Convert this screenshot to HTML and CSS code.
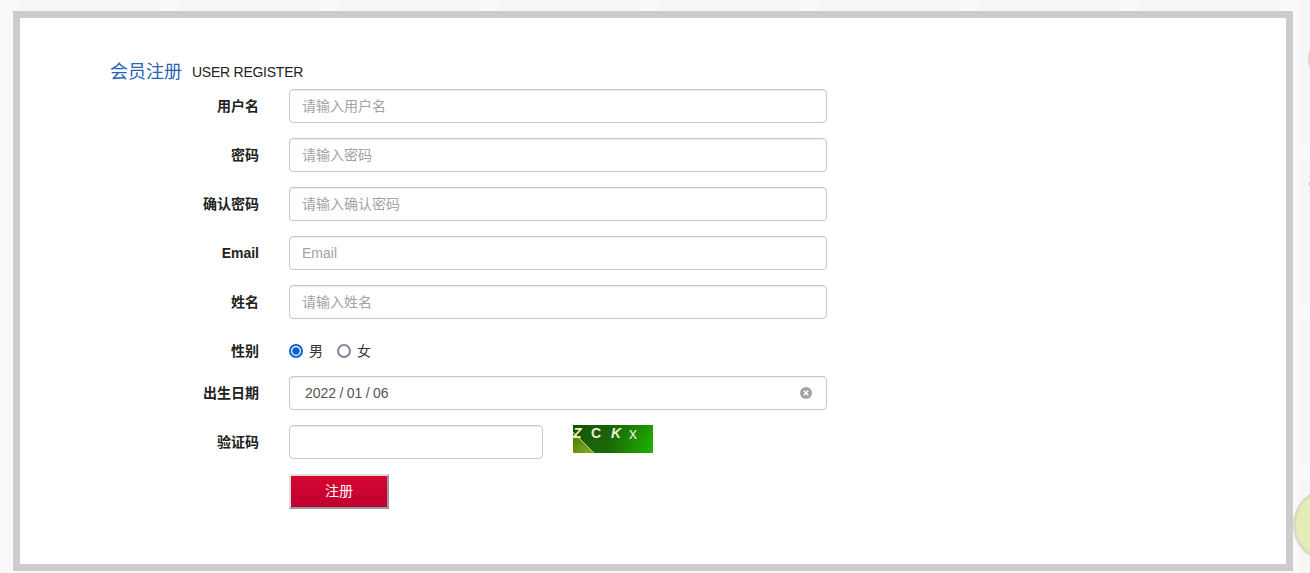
FILE: index.html
```html
<!DOCTYPE html>
<html lang="zh-CN">
<head>
    <meta charset="UTF-8">
    <title>会员注册</title>
    <link rel="stylesheet" href="styles.css">
</head>
<body>
    <div class="decor decor-red"></div>
    <div class="decor decor-pink"></div>
    <div class="decor decor-lime"></div>

    <div class="register-box">
        <div class="title-line">
            <span class="title-cn">会员注册</span>
            <span class="title-en">USER REGISTER</span>
        </div>

        <form class="register-form">
            <div class="form-row">
                <label class="form-label">用户名</label>
                <input class="form-input" type="text" placeholder="请输入用户名">
            </div>
            <div class="form-row">
                <label class="form-label">密码</label>
                <input class="form-input" type="password" placeholder="请输入密码">
            </div>
            <div class="form-row">
                <label class="form-label">确认密码</label>
                <input class="form-input" type="password" placeholder="请输入确认密码">
            </div>
            <div class="form-row">
                <label class="form-label">Email</label>
                <input class="form-input" type="text" placeholder="Email">
            </div>
            <div class="form-row">
                <label class="form-label">姓名</label>
                <input class="form-input" type="text" placeholder="请输入姓名">
            </div>
            <div class="form-row gender-row">
                <label class="form-label">性别</label>
                <label class="radio-item"><input type="radio" name="sex" checked>男</label>
                <label class="radio-item"><input type="radio" name="sex">女</label>
            </div>
            <div class="form-row">
                <label class="form-label">出生日期</label>
                <div class="form-input date-input">
                    <span class="date-value">2022 / 01 / 06</span>
                    <svg class="clear-icon" width="12" height="12" viewBox="0 0 12 12">
                        <circle cx="6" cy="6" r="6" fill="#a3a3a3"/>
                        <path d="M3.8 3.8l4.4 4.4M8.2 3.8L3.8 8.2" stroke="#fff" stroke-width="1.6"/>
                    </svg>
                </div>
            </div>
            <div class="form-row captcha-row">
                <label class="form-label">验证码</label>
                <input class="form-input captcha-input" type="text">
                <div class="captcha">
                    <svg class="captcha-leaf" width="80" height="28" viewBox="0 0 80 28">
                        <defs>
                            <linearGradient id="leaf" x1="0" y1="0" x2="1" y2="1">
                                <stop offset="0" stop-color="#3c7a08"/>
                                <stop offset="1" stop-color="#8fae1e"/>
                            </linearGradient>
                        </defs>
                        <path d="M0 7L21 28H0z" fill="url(#leaf)"/>
                        <path d="M0 7L21 28" stroke="#c3d86a" stroke-width="1"/>
                    </svg>
                    <span class="captcha-z">Z</span>
                    <span class="captcha-c">C</span>
                    <span class="captcha-k">K</span>
                    <span class="captcha-x">x</span>
                </div>
            </div>
            <div class="form-row">
                <span class="form-label"></span>
                <button class="submit-btn" type="button">注册</button>
            </div>
        </form>
    </div>
</body>
</html>
```

FILE: styles.css
```css
* {
    box-sizing: border-box;
}
html, body {
    height: 100%;
}
body {
    margin: 0;
    padding: 11px 17px 0 13px;
    overflow: hidden;
    position: relative;
    font-family: "Liberation Sans", "Noto Sans CJK SC", sans-serif;
    font-size: 14px;
    color: #333;
    background-color: #f6f6f6;
    background-image:
        linear-gradient(90deg, #f9f9f9 0, #f9f9f9 20px, transparent 20px),
        linear-gradient(0deg, #f9f9f9 0, #f9f9f9 16px, transparent 16px);
    background-size: 160px 160px;
}
.decor {
    position: absolute;
    border-radius: 50%;
}
.decor-red {
    left: 1308px;
    top: 40px;
    width: 30px;
    height: 38px;
    background: #f3c9cb;
}
.decor-pink {
    left: 1308px;
    top: 182px;
    width: 8px;
    height: 4px;
    background: #f3cfcf;
}
.decor-lime {
    left: 1293px;
    top: 491px;
    width: 58px;
    height: 68px;
    background: #e4ecb8;
    border: 3px solid #d8dcc0;
}
.register-box {
    position: relative;
    height: 560px;
    padding: 38px 0 0 90px;
    background: #fff;
    border: 7px solid #ccc;
}
.title-line {
    display: flex;
    align-items: flex-end;
    height: 33px;
    padding-bottom: 5px;
}
.title-cn {
    font-size: 18px;
    line-height: 24px;
    color: #2b63b4;
}
.title-en {
    margin: 0 0 2px 10px;
    letter-spacing: -0.25px;
    line-height: 20px;
    color: #222;
}
.form-row {
    display: flex;
    align-items: center;
    height: 34px;
    margin-bottom: 15px;
}
.form-label {
    flex: none;
    width: 149px;
    height: 34px;
    margin-right: 30px;
    text-align: right;
    font-weight: bold;
    line-height: 34px;
    color: #222;
}
.form-input {
    width: 538px;
    height: 34px;
    padding: 0 13px 0 12px;
    font-family: inherit;
    font-size: 14px;
    color: #555;
    background: #fff;
    border: 1px solid #c8c8c8;
    border-radius: 4px;
    box-shadow: inset 0 1px 1px rgba(0,0,0,0.075);
}
.form-input::placeholder {
    color: #a3a3a3;
}
.gender-row {
    margin-bottom: 8px;
}
.radio-item {
    display: flex;
    align-items: center;
    margin-right: 14px;
    line-height: 32px;
    color: #333;
}
.radio-item input {
    appearance: none;
    width: 14px;
    height: 14px;
    margin: 0 6px 0 0;
    background: #fff;
    border: 2px solid #85859a;
    border-radius: 50%;
}
.radio-item input:checked {
    border-color: #0b63ce;
    background: radial-gradient(circle, #0b63ce 0, #0b63ce 3.4px, #fff 4px);
}
.date-input {
    display: flex;
    align-items: center;
    justify-content: space-between;
    padding: 0 14px 0 15px;
}
.date-value {
    word-spacing: -0.5px;
}
.clear-icon {
    display: block;
}
.captcha-row {
    align-items: flex-start;
}
.captcha-input {
    width: 254px;
}
.captcha {
    position: relative;
    flex: none;
    width: 80px;
    height: 28px;
    margin-left: 30px;
    overflow: hidden;
    font-size: 14px;
    font-weight: bold;
    line-height: 16px;
    color: #e9edd0;
    background:
        linear-gradient(180deg, rgba(0,0,0,0.12), rgba(0,0,0,0) 70%),
        linear-gradient(90deg, #1a5a08 0%, #1c6a08 45%, #1fb000 100%);
}
.captcha span {
    position: absolute;
    top: 0;
}
.captcha-leaf {
    position: absolute;
    left: 0;
    top: 0;
}
.captcha .captcha-z {
    left: 0;
    font-style: italic;
    color: #f2eeb8;
}
.captcha .captcha-c {
    left: 18px;
}
.captcha .captcha-k {
    left: 38px;
    font-style: italic;
}
.captcha .captcha-x {
    left: 56px;
    top: 1px;
    font-size: 16px;
    font-weight: normal;
}
.submit-btn {
    width: 100px;
    height: 35px;
    padding: 0 0 3px;
    font-family: inherit;
    font-size: 14px;
    color: #fff;
    background: linear-gradient(#d6062f, #bf0030);
    border: 2px solid;
    border-color: #e2e2e2 #999 #999 #e2e2e2;
    cursor: pointer;
}
```
